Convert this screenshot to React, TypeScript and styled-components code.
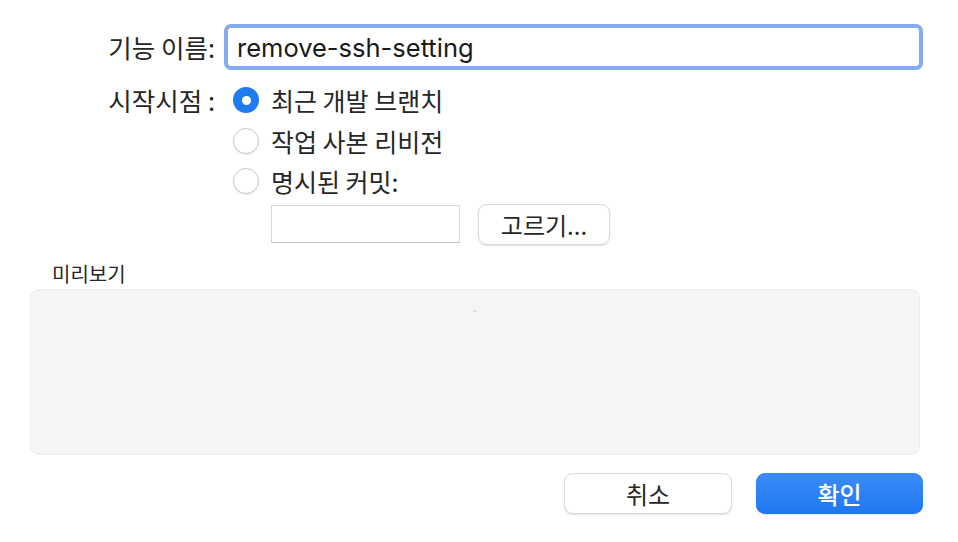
import React from "react";
import styled, { createGlobalStyle } from "styled-components";

const GlobalStyle = createGlobalStyle`
  html, body {
    margin: 0;
    padding: 0;
    background: #ffffff;
  }
  body {
    font-family: "Inter", "Noto Sans CJK KR", sans-serif;
    color: #222222;
  }
`;

const StyledDialog = styled.div`
  width: 958px;
  height: 542px;
  box-sizing: border-box;
  padding: 28px 35px 0 30px;
  display: flex;
  flex-direction: column;
`;

const StyledForm = styled.div`
  display: grid;
  grid-template-columns: 185px 1fr;
  column-gap: 13px;
  align-items: start;
`;

const StyledLabel = styled.div<{ $top?: number }>`
  text-align: right;
  font-size: 25.5px;
  line-height: 38px;
  padding-top: ${(p) => p.$top ?? 0}px;
  font-family: "Noto Sans CJK KR", sans-serif;
  color: #262626;
`;

const StyledNameInput = styled.div`
  height: 38px;
  box-sizing: border-box;
  border-radius: 3px;
  background: #fff;
  box-shadow: 0 0 0 4px #84aaf0;
  display: flex;
  align-items: center;
  padding-left: 9px;
  font-size: 25.5px;
  color: #1a1a1a;
  margin-right: 4px;
`;

const StyledRadioGroup = styled.div`
  display: flex;
  flex-direction: column;
  padding-top: 14px;
  margin-left: 5px;
`;

const StyledRadioRow = styled.div`
  height: 40.5px;
  display: flex;
  align-items: center;
  gap: 12px;
  font-size: 25px;
  font-family: "Noto Sans CJK KR", sans-serif;
  color: #262626;
`;

const StyledRadio = styled.span<{ $checked?: boolean }>`
  flex: none;
  width: 26px;
  height: 26px;
  box-sizing: border-box;
  border-radius: 50%;
  display: flex;
  align-items: center;
  justify-content: center;
  background: ${(p) => (p.$checked ? "#1f7bf2" : "#ffffff")};
  border: ${(p) => (p.$checked ? "none" : "1px solid #c8c8c8")};
  box-shadow: ${(p) =>
    p.$checked ? "none" : "0 1px 1px rgba(0,0,0,0.08)"};

  &::after {
    content: "";
    display: ${(p) => (p.$checked ? "block" : "none")};
    width: 9px;
    height: 9px;
    border-radius: 50%;
    background: #fff;
  }
`;

const StyledCommitRow = styled.div`
  display: flex;
  align-items: center;
  gap: 18px;
  margin-left: 38px;
  margin-top: 2px;
`;

const StyledCommitInput = styled.div`
  width: 189px;
  height: 38px;
  box-sizing: border-box;
  border: 1px solid #d6d6d6;
  border-bottom-color: #c4c4c4;
  background: #fff;
`;

const StyledButton = styled.button<{ $primary?: boolean; $width?: number }>`
  width: ${(p) => p.$width ?? 168}px;
  height: 41px;
  box-sizing: border-box;
  border-radius: 9px;
  font-family: "Noto Sans CJK KR", sans-serif;
  font-size: 24px;
  font-weight: ${(p) => (p.$primary ? 500 : 400)};
  padding: 0;
  cursor: pointer;
  color: ${(p) => (p.$primary ? "#ffffff" : "#262626")};
  background: ${(p) =>
    p.$primary ? "linear-gradient(#3a8cf7, #1f76f1)" : "#ffffff"};
  border: ${(p) => (p.$primary ? "none" : "1px solid #dadada")};
  box-shadow: ${(p) =>
    p.$primary
      ? "0 1px 1px rgba(0,0,0,0.1)"
      : "0 1px 2px rgba(0,0,0,0.12)"};
`;

const StyledPreviewLabel = styled.div`
  font-family: "Noto Sans CJK KR", sans-serif;
  font-size: 20px;
  color: #262626;
  margin: 17px 0 0 22px;
  line-height: 24px;
`;

const StyledPreview = styled.div`
  margin-top: 3px;
  margin-right: 3px;
  height: 166px;
  box-sizing: border-box;
  background: #f5f5f5;
  border: 1px solid #ebebeb;
  border-radius: 9px;
  display: flex;
  justify-content: center;
  padding-top: 15px;
  font-size: 9px;
  color: #c0c0c0;
`;

const StyledFooter = styled.div`
  display: flex;
  justify-content: flex-end;
  gap: 24px;
  margin-top: 18px;
`;

const radioOptions = [
  { label: "최근 개발 브랜치", checked: true },
  { label: "작업 사본 리비전", checked: false },
  { label: "명시된 커밋:", checked: false },
];

export default function App() {
  return (
    <>
      <GlobalStyle />
      <StyledDialog>
        <StyledForm>
          <StyledLabel>기능 이름:</StyledLabel>
          <StyledNameInput>remove-ssh-setting</StyledNameInput>
          <StyledLabel $top={15}>시작시점 :</StyledLabel>
          <StyledRadioGroup>
            {radioOptions.map((o) => (
              <StyledRadioRow key={o.label}>
                <StyledRadio $checked={o.checked} />
                {o.label}
              </StyledRadioRow>
            ))}
            <StyledCommitRow>
              <StyledCommitInput />
              <StyledButton $width={132}>고르기...</StyledButton>
            </StyledCommitRow>
          </StyledRadioGroup>
        </StyledForm>
        <StyledPreviewLabel>미리보기</StyledPreviewLabel>
        <StyledPreview>ᵕ</StyledPreview>
        <StyledFooter>
          <StyledButton>취소</StyledButton>
          <StyledButton $primary $width={167}>
            확인
          </StyledButton>
        </StyledFooter>
      </StyledDialog>
    </>
  );
}
